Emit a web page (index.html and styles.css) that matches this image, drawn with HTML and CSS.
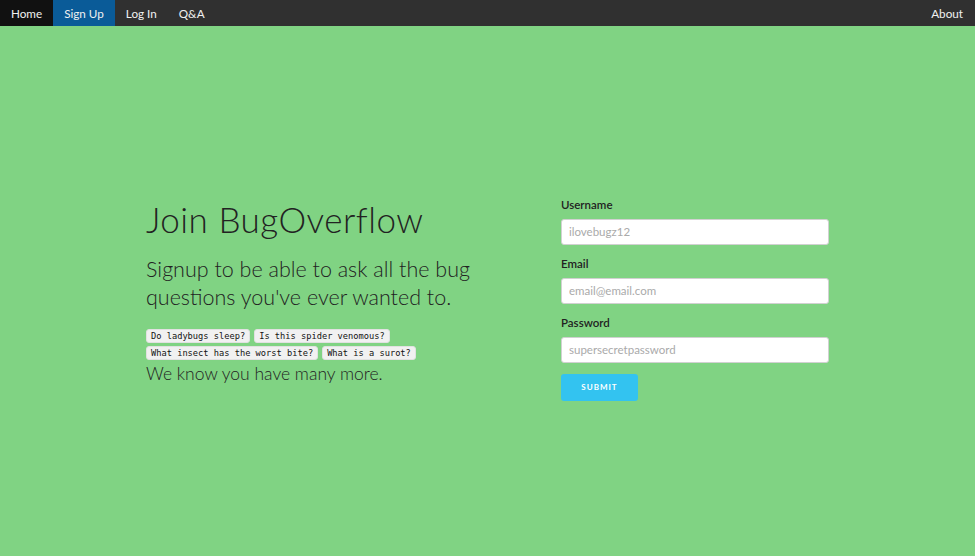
FILE: index.html
```html
<!DOCTYPE html>
<html>
<head>
<meta charset="utf-8">
<title>Join BugOverflow</title>
<link rel="stylesheet" href="styles.css">
</head>
<body>
<nav class="topnav">
  <a class="nav-link nav-home" href="#">Home</a>
  <a class="nav-link nav-active" href="#">Sign Up</a>
  <a class="nav-link" href="#">Log In</a>
  <a class="nav-link" href="#">Q&amp;A</a>
  <a class="nav-link nav-right" href="#">About</a>
</nav>
<main class="page">
  <div class="container">
    <section class="intro">
      <h1 class="title">Join BugOverflow</h1>
      <p class="lead">Signup to be able to ask all the bug questions you've ever wanted to.</p>
      <div class="examples">
        <code class="q">Do ladybugs sleep?</code>
        <code class="q">Is this spider venomous?</code>
        <code class="q">What insect has the worst bite?</code>
        <code class="q">What is a surot?</code>
      </div>
      <p class="more">We know you have many more.</p>
    </section>
    <form class="signup">
      <label class="field-label" for="username">Username</label>
      <input class="field" id="username" type="text" placeholder="ilovebugz12">
      <label class="field-label" for="email">Email</label>
      <input class="field" id="email" type="email" placeholder="email@email.com">
      <label class="field-label" for="password">Password</label>
      <input class="field" id="password" type="password" placeholder="supersecretpassword">
      <button class="submit" type="button">Submit</button>
    </form>
  </div>
</main>
</body>
</html>
```
FILE: styles.css
```css
* { box-sizing: border-box; }
html, body { margin: 0; padding: 0; }
body {
  background: #80d383;
  font-family: "Lato", "Open Sans", sans-serif;
  color: #222;
  height: 556px;
  overflow: hidden;
}
.topnav {
  display: flex;
  height: 26px;
  background: #303030;
}
.nav-link {
  display: block;
  color: #f0f0f0;
  text-decoration: none;
  font-size: 11.7px;
  line-height: 26px;
  padding: 0 11px;
}
.nav-home { background: #111111; }
.nav-active { background: #0a5b98; }
.nav-right { margin-left: auto; padding-right: 12px; }
.page {
  height: 530px;
  display: flex;
  align-items: center;
  justify-content: center;
}
.container {
  width: 683px;
  display: grid;
  grid-template-columns: 1fr 268px;
  align-items: start;
  margin-top: 16px;
}
.title {
  font-weight: 300;
  font-size: 35px;
  line-height: 42px;
  margin: 0 0 15px 0;
  letter-spacing: 0.5px;
}
.lead {
  font-weight: 300;
  font-size: 21.5px;
  line-height: 28px;
  margin: 0 0 18px 0;
  width: 340px;
}
.examples {
  display: flex;
  flex-wrap: wrap;
  gap: 3px 4px;
  width: 290px;
}
.q {
  font-family: "DejaVu Sans Mono", monospace;
  font-size: 8.7px;
  background: #f1f1f1;
  border: 1px solid #e1e1e1;
  border-radius: 3px;
  padding: 0 4px;
  line-height: 12px;
  color: #111;
}
.more {
  font-weight: 300;
  font-size: 17.5px;
  line-height: 22px;
  margin: 3px 0 0 0;
}
.signup {
  display: flex;
  flex-direction: column;
  align-items: flex-start;
}
.field-label {
  font-size: 11.5px;
  font-weight: 600;
  color: #222;
  line-height: 14px;
  margin-bottom: 7px;
}
.field {
  width: 268px;
  height: 26px;
  border: 1px solid #d1d1d1;
  border-radius: 3px;
  background: #fff;
  padding: 0 7px;
  font-family: "Lato", sans-serif;
  font-size: 11.5px;
  margin: 0 0 12px 0;
  color: #222;
}
.field::placeholder { color: #aaaaaa; font-weight: 400; }
.submit {
  margin-top: -1px;
  width: 77px;
  height: 27px;
  border: none;
  border-radius: 3px;
  background: #33c3f0;
  color: #fff;
  font-family: "Lato", sans-serif;
  font-weight: 700;
  font-size: 8px;
  letter-spacing: 1px;
  text-transform: uppercase;
}
```
